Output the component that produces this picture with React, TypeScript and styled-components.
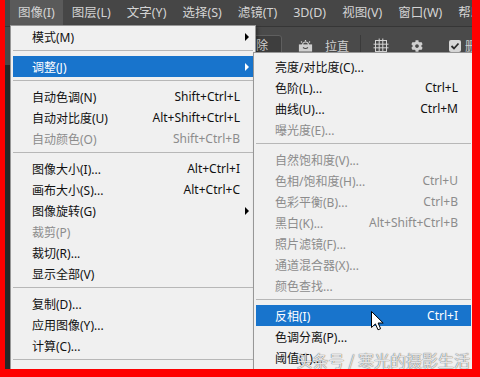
import React from 'react';
import styled, { createGlobalStyle } from 'styled-components';
import { FaCog } from 'react-icons/fa';

const GlobalStyle = createGlobalStyle`
  html, body {
    margin: 0;
    padding: 0;
    background: #fe0000;
  }
  body {
    font-family: "Noto Sans", "Noto Sans CJK SC", sans-serif;
  }
`;

// red frame drawn round the whole screenshot
const Frame = styled.div`
  width: 480px;
  height: 377px;
  box-sizing: border-box;
  border-style: solid;
  border-color: #fe0000;
  border-width: 0 8px 8px 5px;
  overflow: hidden;
`;

const Screen = styled.div`
  position: relative;
  width: 100%;
  height: 100%;
  overflow: hidden;
  display: flex;
  flex-direction: column;
  background: #282828;
`;

const MenuBar = styled.div`
  display: flex;
  flex-shrink: 0;
  height: 26px;
  padding-left: 5px;
  background: #464646;
  white-space: nowrap;
`;

const BarItem = styled.div<{ $open?: boolean }>`
  padding: 0 7px;
  margin-right: 2px;
  line-height: 26px;
  font-size: 12.5px;
  color: #d4d4d4;
  background: ${p => (p.$open ? '#5a5a5a' : 'transparent')};
  &:first-child {
    padding: 0 8px;
  }
`;

const Body = styled.div`
  flex: 1;
  display: flex;
`;

const LeftEdge = styled.div`
  width: 5px;
  background: #2a2a2a;
`;

const MainColumn = styled.div`
  flex: 1;
  display: flex;
  flex-direction: column;
`;

const OptionsBar = styled.div`
  display: flex;
  align-items: center;
  flex-shrink: 0;
  height: 38px;
  padding-left: 225px;
  border-top: 1px solid #363636;
  background: #4a4a4a;
  white-space: nowrap;
  font-size: 12px;
  color: #d0d0d0;
`;

const ToolButton = styled.div`
  height: 20px;
  line-height: 20px;
  padding: 0 13px;
  border: 1px solid #5f5f5f;
  border-radius: 3px;
  background: #3e3e3e;
`;

const IconSlot = styled.div<{ $ml: number }>`
  display: flex;
  align-items: center;
  margin-left: ${p => p.$ml}px;
  color: #d0d0d0;
`;

const OptLabel = styled.span<{ $ml: number }>`
  margin-left: ${p => p.$ml}px;
`;

const VLine = styled.div`
  width: 1px;
  height: 22px;
  margin-left: 11px;
  background: #3a3a3a;
`;

const CheckBox = styled.div`
  width: 12px;
  height: 12px;
  margin-left: 26px;
  border-radius: 2px;
  background: #d8d8d8;
  display: flex;
  align-items: center;
  justify-content: center;
`;

const Canvas = styled.div`
  flex: 1;
  background: #282828;
`;

const DropMenu = styled.div<{ $left: number; $top: number; $width: number; $pad: string }>`
  position: absolute;
  left: ${p => p.$left}px;
  top: ${p => p.$top}px;
  width: ${p => p.$width}px;
  box-sizing: border-box;
  padding: ${p => p.$pad};
  background: #f0f0f0;
  border: 1px solid #979797;
  box-shadow: 2px 2px 3px rgba(0, 0, 0, 0.35);
`;

const Row = styled.div<{ $active?: boolean; $disabled?: boolean }>`
  display: grid;
  grid-template-columns: 1fr auto 13px;
  align-items: center;
  height: 21px;
  padding-left: 19px;
  font-size: 12px;
  white-space: nowrap;
  background: ${p => (p.$active ? '#1874cc' : 'transparent')};
  color: ${p => (p.$active ? '#ffffff' : p.$disabled ? '#8c8c8c' : '#111111')};
`;

const Arrow = styled.span<{ $light?: boolean }>`
  width: 0;
  height: 0;
  margin-left: 5px;
  border-left: 4px solid ${p => (p.$light ? '#ffffff' : '#000000')};
  border-top: 4px solid transparent;
  border-bottom: 4px solid transparent;
`;

const Sep = styled.div`
  height: 1px;
  margin: 3px 0 5px;
  background: #b7b7b7;
`;

const Pointer = styled.svg`
  position: absolute;
  left: 366px;
  top: 311px;
`;

const Watermark = styled.div`
  position: absolute;
  right: 2px;
  bottom: 0;
  font-family: "Noto Sans CJK SC", sans-serif;
  font-size: 16px;
  line-height: 17px;
  color: rgba(255, 255, 255, 0.85);
  text-shadow: 0 0 1px rgba(0, 0, 0, 0.55), 0 0 1px rgba(0, 0, 0, 0.4);
  white-space: nowrap;
`;

type Item =
  | 'sep'
  | { label: string; keys?: string; sub?: boolean; disabled?: boolean; active?: boolean };

const imageMenu: Item[] = [
  { label: '模式(M)', sub: true },
  'sep',
  { label: '调整(J)', sub: true, active: true },
  'sep',
  { label: '自动色调(N)', keys: 'Shift+Ctrl+L' },
  { label: '自动对比度(U)', keys: 'Alt+Shift+Ctrl+L' },
  { label: '自动颜色(O)', keys: 'Shift+Ctrl+B', disabled: true },
  'sep',
  { label: '图像大小(I)...', keys: 'Alt+Ctrl+I' },
  { label: '画布大小(S)...', keys: 'Alt+Ctrl+C' },
  { label: '图像旋转(G)', sub: true },
  { label: '裁剪(P)', disabled: true },
  { label: '裁切(R)...' },
  { label: '显示全部(V)' },
  'sep',
  { label: '复制(D)...' },
  { label: '应用图像(Y)...' },
  { label: '计算(C)...' },
  'sep',
  { label: '变量(B)', sub: true },
  { label: '应用数据组(L)...', disabled: true },
];

const adjustMenu: Item[] = [
  { label: '亮度/对比度(C)...' },
  { label: '色阶(L)...', keys: 'Ctrl+L' },
  { label: '曲线(U)...', keys: 'Ctrl+M' },
  { label: '曝光度(E)...', disabled: true },
  'sep',
  { label: '自然饱和度(V)...', disabled: true },
  { label: '色相/饱和度(H)...', keys: 'Ctrl+U', disabled: true },
  { label: '色彩平衡(B)...', keys: 'Ctrl+B', disabled: true },
  { label: '黑白(K)...', keys: 'Alt+Shift+Ctrl+B', disabled: true },
  { label: '照片滤镜(F)...', disabled: true },
  { label: '通道混合器(X)...', disabled: true },
  { label: '颜色查找...', disabled: true },
  'sep',
  { label: '反相(I)', keys: 'Ctrl+I', active: true },
  { label: '色调分离(P)...' },
  { label: '阈值(T)...' },
  { label: '渐变映射(G)...' },
];

const menuTitles = ['图像(I)', '图层(L)', '文字(Y)', '选择(S)', '滤镜(T)', '3D(D)', '视图(V)', '窗口(W)', '帮助(H)'];

function MenuItems({ items }: { items: Item[] }) {
  return (
    <>
      {items.map((it, i) =>
        it === 'sep' ? (
          <Sep key={i} />
        ) : (
          <Row key={i} $active={it.active} $disabled={it.disabled}>
            <span>{it.label}</span>
            <span>{it.keys}</span>
            {it.sub ? <Arrow $light={it.active} /> : <span />}
          </Row>
        )
      )}
    </>
  );
}

export default function App() {
  return (
    <>
      <GlobalStyle />
      <Frame>
        <Screen>
          <MenuBar>
            {menuTitles.map((t, i) => (
              <BarItem key={t} $open={i === 0}>{t}</BarItem>
            ))}
          </MenuBar>
          <Body>
            <LeftEdge />
            <MainColumn>
              <OptionsBar>
                <ToolButton>清除</ToolButton>
                <IconSlot $ml={16}>
                  <svg width="15" height="14" viewBox="0 0 15 14" fill="none" stroke="#d0d0d0" strokeWidth="1.2">
                    <path d="M4.5 6 A3 3 0 0 1 10.5 6" />
                    <rect x="1.5" y="6" width="12" height="6" fill="#d0d0d0" />
                    <path d="M5 8.5 Q7.5 10.5 10 8.5" stroke="#4a4a4a" />
                    <path d="M7.5 1 v1.5 M3 2.5 l1 1 M12 2.5 l-1 1" />
                  </svg>
                </IconSlot>
                <OptLabel $ml={12}>拉直</OptLabel>
                <VLine />
                <IconSlot $ml={12}>
                  <svg width="16" height="16" viewBox="0 0 16 16" fill="none" stroke="#d4d4d4" strokeWidth="1">
                    <rect x="2.5" y="2.5" width="11" height="11" />
                    <path d="M6.2 0.5 V15.5 M9.8 0.5 V15.5 M0.5 6.2 H15.5 M0.5 9.8 H15.5" />
                  </svg>
                </IconSlot>
                <IconSlot $ml={22}>
                  <FaCog size={12} />
                </IconSlot>
                <CheckBox>
                  <svg width="10" height="10" viewBox="0 0 10 10" fill="none" stroke="#2c2c2c" strokeWidth="1.8">
                    <path d="M1.5 5 L4 7.5 L8.5 2.5" />
                  </svg>
                </CheckBox>
                <OptLabel $ml={4}>删除裁剪的像素</OptLabel>
              </OptionsBar>
              <Canvas />
            </MainColumn>
          </Body>

          <DropMenu $left={5} $top={25} $width={246} $pad="0 2px 2px">
            <MenuItems items={imageMenu} />
          </DropMenu>

          <DropMenu $left={248} $top={52} $width={221} $pad="3px 2px 2px">
            <MenuItems items={adjustMenu} />
          </DropMenu>

          <Pointer width="14" height="21" viewBox="0 0 14 21">
            <path
              d="M0.5 0.5 L0.5 16.5 L4.4 12.9 L7 18.8 L9.6 17.7 L7.1 12 L12.2 12 Z"
              fill="#ffffff"
              stroke="#000000"
              strokeWidth="1"
              strokeLinejoin="round"
            />
          </Pointer>

          <Watermark>头条号 / 寒光的摄影生活</Watermark>
        </Screen>
      </Frame>
    </>
  );
}
